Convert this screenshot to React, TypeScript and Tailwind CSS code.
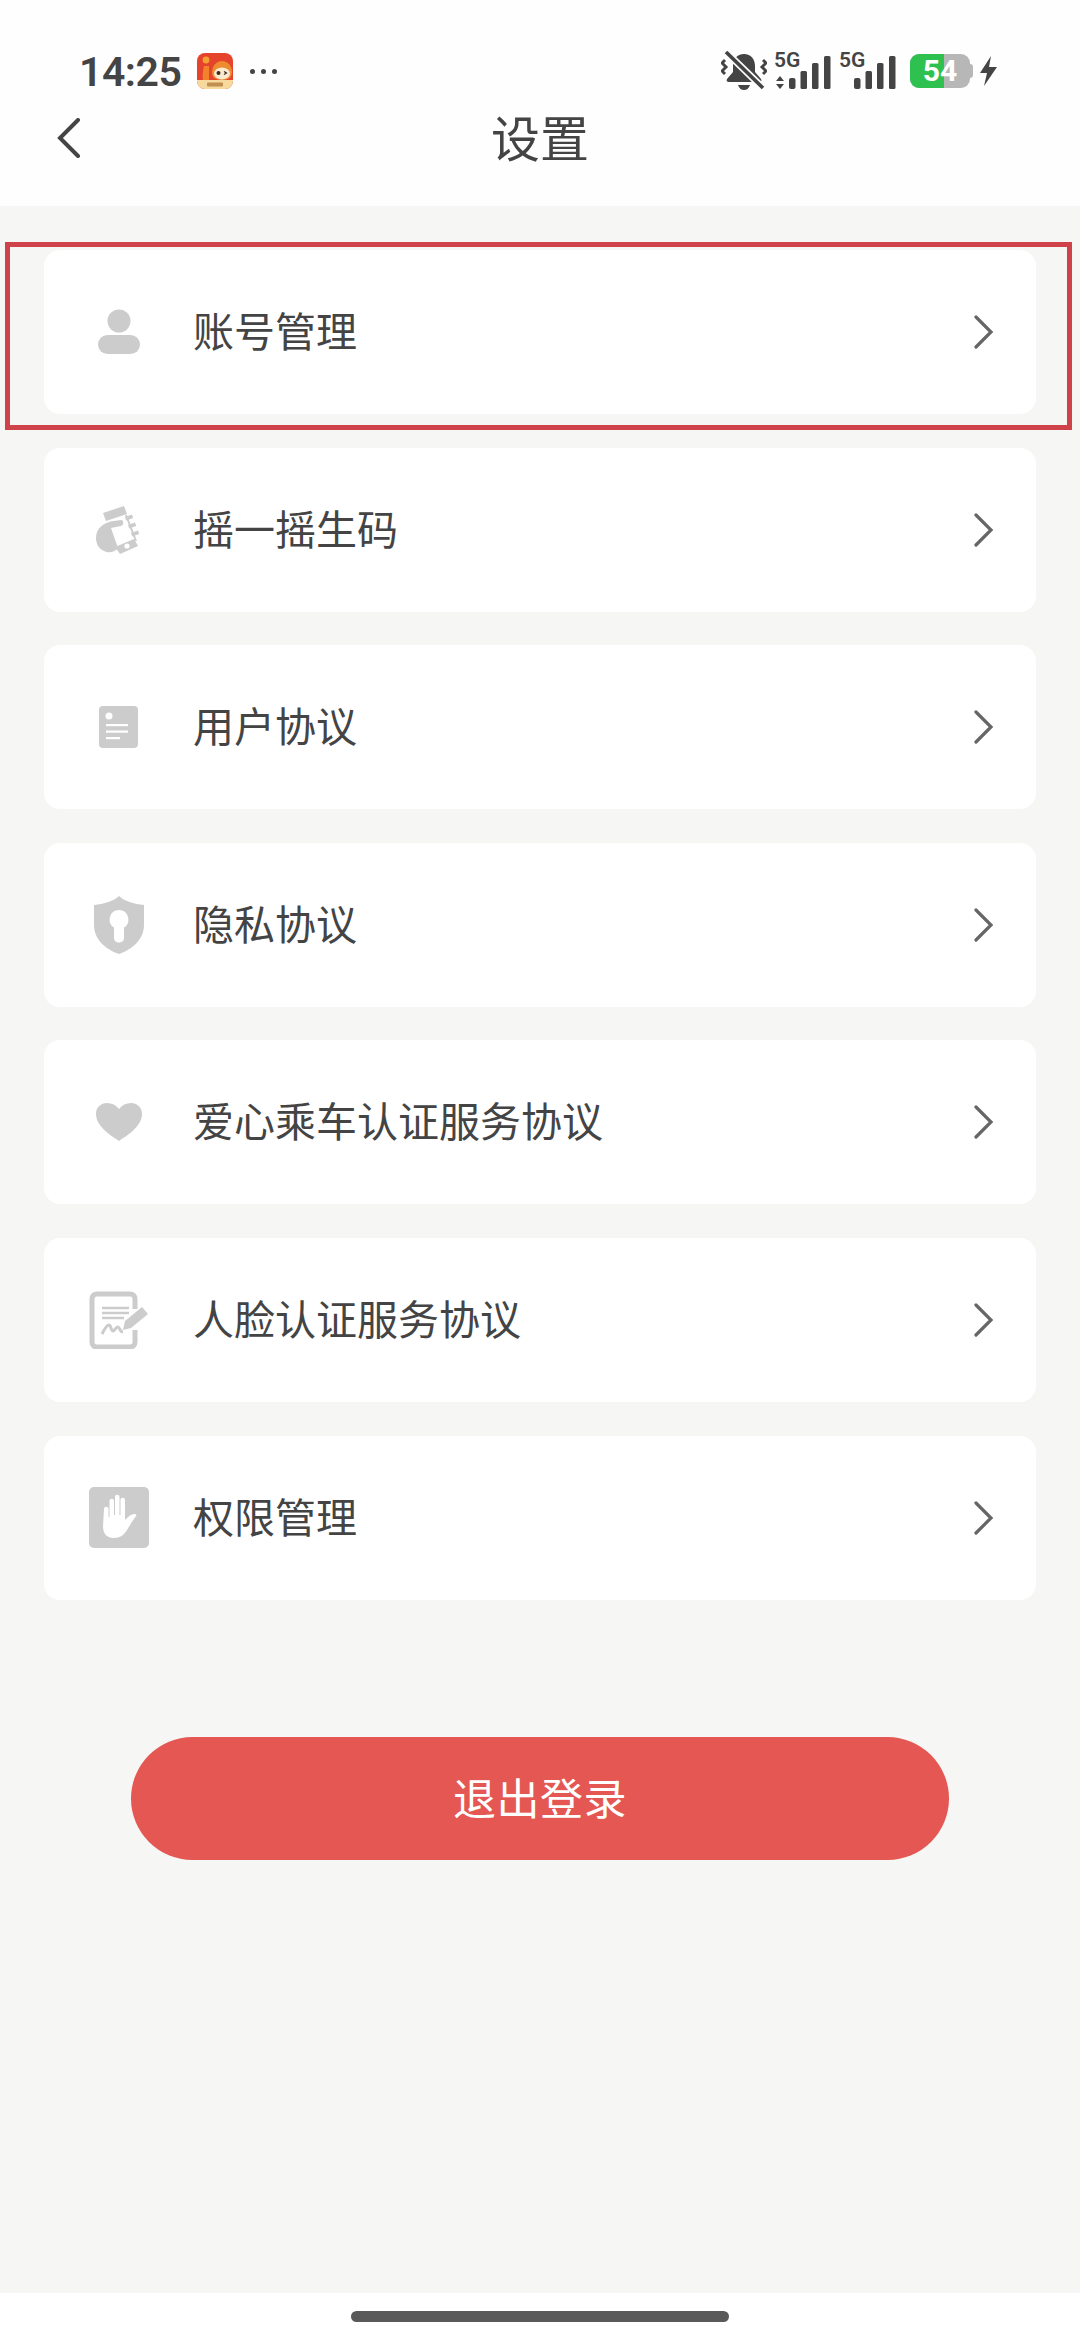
import React from "react";

const G = "#cccccc";

function Bell() {
  return (
    <svg width="46" height="40" viewBox="0 0 46 40" className="shrink-0">
      <path d="M23 3c-7 0-11 5-11 12v6l-6 7c-1 2 0 3 2 3h30c2 0 3-1 2-3l-6-7v-6c0-7-4-12-11-12z" fill="#444" />
      <path d="M17 34h12c-1 3-3 5-6 5s-5-2-6-5z" fill="#444" />
      <path d="M3 -1 L42 37" stroke="#fdfdfd" strokeWidth="7" />
      <path d="M5 1 L42 37" stroke="#444" strokeWidth="3.6" />
      <path d="M4 9l-3 3 4 4-4 4 3 3M42 9l3 3-4 4 4 4-3 3" stroke="#444" strokeWidth="3" fill="none" />
    </svg>
  );
}

function Signal({ arrows }: { arrows?: boolean }) {
  return (
    <div className="relative w-[58px] h-[38px] shrink-0">
      <span className="absolute left-0 top-[-2px] text-[21px] leading-[21px] font-semibold text-[#444] font-['Roboto',sans-serif]">5G</span>
      <svg width="58" height="38" viewBox="0 0 58 38" className="block">
        {arrows && (
          <>
            <path d="M2 29l4-5 4 5z" fill="#444" />
            <path d="M2 32l4 5 4-5z" fill="#444" />
          </>
        )}
        <rect x="15" y="26" width="6.5" height="11" rx="2" fill="#444" />
        <rect x="26.5" y="19" width="6.5" height="18" rx="1.5" fill="#444" />
        <rect x="38" y="11" width="6.5" height="26" rx="1.5" fill="#444" />
        <rect x="50" y="4" width="6.5" height="33" rx="1.5" fill="#444" />
      </svg>
    </div>
  );
}

function Battery() {
  return (
    <div className="relative w-[60px] h-[34px] rounded-[9px] overflow-hidden bg-[#b7b7b7] flex items-center justify-center shrink-0">
      <div className="absolute left-0 top-0 bottom-0 w-[34px] bg-[#2fc14f]" />
      <span className="relative text-white font-bold text-[30px] leading-none font-['Roboto',sans-serif]">54</span>
    </div>
  );
}

function AppIcon() {
  return (
    <svg width="36" height="36" viewBox="0 0 36 36" className="shrink-0">
      <defs>
        <clipPath id="aic">
          <rect width="36" height="36" rx="8" />
        </clipPath>
      </defs>
      <g clipPath="url(#aic)">
        <rect width="36" height="36" fill="#e5432c" />
        <rect y="27" width="36" height="9" fill="#f7d99e" />
        <circle cx="9" cy="7" r="3.4" fill="#f5a033" />
        <path d="M7 13h5v14H6c-1-4 0-10 1-14z" fill="#f2832c" />
        <path d="M15 20c0-7 4-12 10-12s10 5 10 11c0 5-3 8-10 8s-10-3-10-7z" fill="#ee8a30" />
        <ellipse cx="25" cy="20.5" rx="8" ry="6" fill="#fbeacf" />
        <circle cx="21.5" cy="20" r="2" fill="#3a2a20" />
        <path d="M27 18.5l2.5 1.5-2.5 1.5" stroke="#3a2a20" strokeWidth="1.2" fill="none" />
        <rect x="10" y="29.5" width="16" height="4" rx="1" fill="#a8702e" opacity="0.7" />
      </g>
    </svg>
  );
}

function UserIcon() {
  return (
    <svg width="44" height="46" viewBox="0 0 44 46">
      <circle cx="22" cy="12" r="11.5" fill={G} />
      <rect x="1" y="26" width="42" height="19" rx="9.5" fill={G} />
    </svg>
  );
}

function ShakeIcon() {
  return (
    <svg width="46" height="48" viewBox="0 0 46 48">
      <path d="M7 7 L28 0 L31 8 L10 15z" fill={G} />
      <path d="M29 11l7-2.5 1.2 3.4-7 2.5zM32 19l7-2.5 1.2 3.4-7 2.5zM35 27l7-2.5 1.2 3.4-7 2.5z" fill={G} />
      <path d="M30 9 L40 35" stroke={G} strokeWidth="2" />
      <path d="M19 41 L38 33 L42 40 L24 48z" fill={G} />
      <circle cx="31" cy="40" r="2.6" fill="#fff" />
      <path d="M0 32C0 22 8 16 18 15L25 14C28 14 28 19 25 20L15 22L22 42C18 47 12 47 8 45C3 43 0 38 0 32z" fill={G} />
    </svg>
  );
}

function DocIcon() {
  return (
    <svg width="40" height="42" viewBox="0 0 40 42">
      <rect width="39" height="42" rx="4" fill={G} />
      <circle cx="10" cy="10" r="3.5" fill="#fff" />
      <rect x="7" y="18" width="22" height="2.2" fill="#fff" />
      <rect x="7" y="24.5" width="22" height="2.2" fill="#fff" />
      <rect x="7" y="31" width="14" height="2.2" fill="#fff" />
    </svg>
  );
}

function ShieldIcon() {
  return (
    <svg width="52" height="58" viewBox="0 0 52 58">
      <path d="M26 0c5 5 15 8 25 9v20c0 14-11 24-25 29C12 53 1 43 1 29V9c10-1 20-4 25-9z" fill={G} />
      <path d="M26 14a9.5 9.5 0 0 1 5 17.5V42c0 6-10 6-10 0V31.5A9.5 9.5 0 0 1 26 14z" fill="#fff" />
    </svg>
  );
}

function HeartIcon() {
  return (
    <svg width="48" height="40" viewBox="0 0 48 40">
      <path d="M24 39C15 33 1 24 1 12 1 5 6 1 12 1c5 0 9 2 12 6 3-4 7-6 12-6 6 0 11 4 11 11 0 12-14 21-23 27z" fill={G} />
    </svg>
  );
}

function SignIcon() {
  return (
    <svg width="60" height="58" viewBox="0 0 60 58">
      <path d="M46 39v12c0 3-2 5-5 5H8c-3 0-5-2-5-5V8c0-3 2-5 5-5h33c3 0 5 2 5 5v10" stroke={G} strokeWidth="5" fill="none" />
      <path d="M13 17h27M13 22h27M13 27h22" stroke={G} strokeWidth="2.4" />
      <path d="M13 43c3-6 5-9 7-9 2 0 2 6 4 6s3-5 5-4 2 5 5 5" stroke={G} strokeWidth="3" fill="none" />
      <path d="M37 39l2-9 17-14 6 7-17 14z" fill={G} transform="translate(-3 0)" />
    </svg>
  );
}

function HandIcon() {
  return (
    <svg width="60" height="61" viewBox="0 0 60 61">
      <rect width="60" height="61" rx="5" fill={G} />
      <path d="M15 22c0-3 4.5-3 4.5 0v8h1V14c0-3 4.5-3 4.5 0v14h1V10c0-3 4.5-3 4.5 0v18h1V13c0-3 4.5-3 4.5 0v20c2-2 6-6 9-6 2 0 3 1 2 2-3 4-6 9-9 14-3 5-7 8-13 8-8 0-11-5-11-12z" fill="#fff" />
    </svg>
  );
}

const rows: { label: string; icon: React.ReactNode }[] = [
  { label: "账号管理", icon: <UserIcon /> },
  { label: "摇一摇生码", icon: <ShakeIcon /> },
  { label: "用户协议", icon: <DocIcon /> },
  { label: "隐私协议", icon: <ShieldIcon /> },
  { label: "爱心乘车认证服务协议", icon: <HeartIcon /> },
  { label: "人脸认证服务协议", icon: <SignIcon /> },
  { label: "权限管理", icon: <HandIcon /> },
];

export default function App() {
  return (
    <div className="w-[1080px] h-[2339px] flex flex-col bg-[#f6f6f5] overflow-hidden font-['Noto_Sans_CJK_SC','Noto_Sans',sans-serif]">
      <header className="h-[206px] shrink-0 bg-[#fefefe] pt-[51px] flex flex-col">
        <div className="flex items-center justify-between pl-[79px] pr-[83px] h-[40px]">
          <div className="flex items-center">
            <span className="text-[41px] leading-none font-semibold tracking-[-0.5px] text-[#444] translate-y-[1px] font-['Roboto',sans-serif]">14:25</span>
            <div className="ml-[16px]"><AppIcon /></div>
            <div className="ml-[17px] flex gap-[6px]">
              <span className="w-[5px] h-[5px] rounded-full bg-[#444]" />
              <span className="w-[5px] h-[5px] rounded-full bg-[#444]" />
              <span className="w-[5px] h-[5px] rounded-full bg-[#444]" />
            </div>
          </div>
          <div className="flex items-center">
            <Bell />
            <div className="ml-[7px]"><Signal arrows /></div>
            <div className="ml-[7px]"><Signal /></div>
            <div className="ml-[13px] flex items-center">
              <Battery />
              <span className="w-[3px] h-[14px] bg-[#b7b7b7] rounded-r-sm" />
            </div>
            <svg width="17" height="30" viewBox="0 0 17 30" className="ml-[7px]">
              <path d="M11 0 L0 17 H7 L4 30 L17 11 H9z" fill="#444" />
            </svg>
          </div>
        </div>
        <div className="relative flex items-center justify-center mt-[19px] h-[50px]">
          <svg width="24" height="40" viewBox="0 0 24 40" className="absolute left-[57px] top-[8px]">
            <path d="M21 2 L3 20 L21 38" stroke="#444" strokeWidth="4" fill="none" strokeLinecap="round" />
          </svg>
          <h1 className="text-[49px] leading-none font-normal text-[#444]">设置</h1>
        </div>
      </header>

      <main className="flex-1 flex flex-col">
        <div className="relative flex flex-col gap-[33.6px] mt-[44px] px-[44px]">
          {rows.map((r) => (
            <div key={r.label} className="h-[164px] rounded-[16px] bg-white flex items-center">
              <div className="w-[149px] shrink-0 flex items-center justify-center">{r.icon}</div>
              <span className="text-[41px] leading-none text-[#444] -mt-[5px]">{r.label}</span>
              <svg width="22" height="34" viewBox="0 0 22 34" className="ml-auto mr-[41px]">
                <path d="M3 2 L18 17 L3 32" stroke="#666" strokeWidth="3.2" fill="none" strokeLinecap="round" />
              </svg>
            </div>
          ))}
          <div className="absolute left-[5px] top-[-8px] w-[1067px] h-[188px] border-[5px] border-[#cf4249] pointer-events-none" />
        </div>

        <button className="mt-[137px] mx-auto w-[818px] h-[123px] rounded-full bg-[#e45752] text-white text-[43px] leading-none tracking-[0.5px] pb-[4px]">
          退出登录
        </button>

        <div className="mt-auto h-[46px] bg-white flex justify-center pt-[18px]">
          <div className="w-[378px] h-[11px] rounded-full bg-[#595959]" />
        </div>
      </main>
    </div>
  );
}
